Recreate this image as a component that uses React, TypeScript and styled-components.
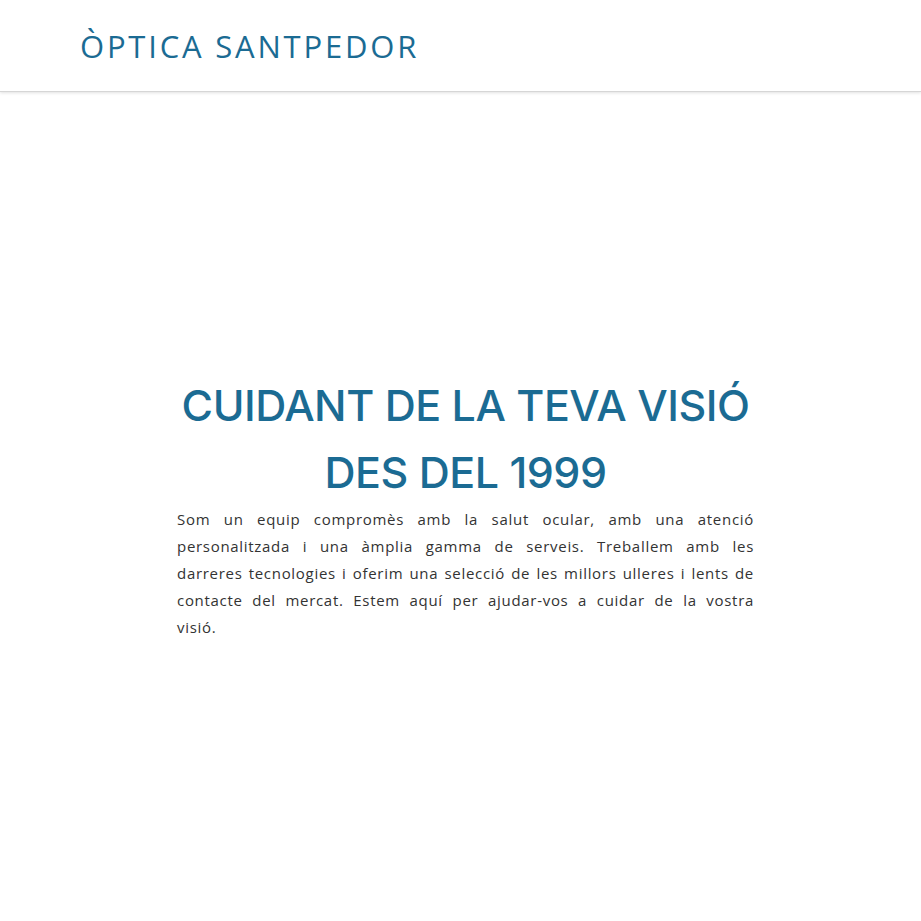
import React from "react";
import styled, { createGlobalStyle } from "styled-components";

const GlobalStyle = createGlobalStyle`
  html, body {
    margin: 0;
    padding: 0;
    background: #ffffff;
  }
  * {
    box-sizing: border-box;
  }
`;

const introLines = [
  "Som un equip compromès amb la salut ocular, amb una atenció",
  "personalitzada i una àmplia gamma de serveis. Treballem amb les",
  "darreres tecnologies i oferim una selecció de les millors ulleres i lents de",
  "contacte del mercat. Estem aquí per ajudar-vos a cuidar de la vostra",
  "visió.",
];

const App = () => {
  return (
    <>
      <GlobalStyle />
      <Page>
        <Header>
          <Logo>ÒPTICA SANTPEDOR</Logo>
        </Header>

        <Hero>
          <HeroInner>
            <Title>
              CUIDANT DE LA TEVA VISIÓ
              <br />
              DES DEL 1999
            </Title>
            <Intro>
              {introLines.map((line, i) => (
                <IntroLine key={i} $last={i === introLines.length - 1}>
                  {line}{" "}
                </IntroLine>
              ))}
            </Intro>
          </HeroInner>
        </Hero>
      </Page>
    </>
  );
};

export default App;

const Page = styled.div`
  min-height: 100vh;
  display: flex;
  flex-direction: column;
`;

const Header = styled.header`
  height: 92px;
  display: flex;
  align-items: center;
  padding: 0 0 0 80px;
  border-bottom: 1px solid #d6d6d6;
  box-shadow: 0 1px 3px rgba(0, 0, 0, 0.12);
`;

const Logo = styled.h1`
  margin: 0;
  font-family: "Open Sans", "DejaVu Sans", sans-serif;
  font-weight: 500;
  font-size: 31px;
  letter-spacing: 2.8px;
  color: #1b6b93;
`;

const Hero = styled.main`
  flex: 1;
  display: flex;
  align-items: center;
  justify-content: center;
  padding-left: 10px;
`;

const HeroInner = styled.section`
  width: 577px;
  display: flex;
  flex-direction: column;
`;

const Title = styled.h2`
  margin: 0;
  font-family: "Inter", "Open Sans", sans-serif;
  font-weight: 500;
  font-size: 43px;
  line-height: 67px;
  letter-spacing: -0.5px;
  text-align: center;
  color: #1b6b93;
  white-space: nowrap;
`;

const Intro = styled.p`
  margin: 0;
  font-family: "Open Sans", "DejaVu Sans", sans-serif;
  font-size: 15px;
  line-height: 27px;
  letter-spacing: 0.7px;
  color: #333333;
`;

const IntroLine = styled.span<{ $last?: boolean }>`
  display: block;
  white-space: nowrap;
  text-align: ${({ $last }) => ($last ? "left" : "justify")};
  text-align-last: ${({ $last }) => ($last ? "left" : "justify")};
`;
